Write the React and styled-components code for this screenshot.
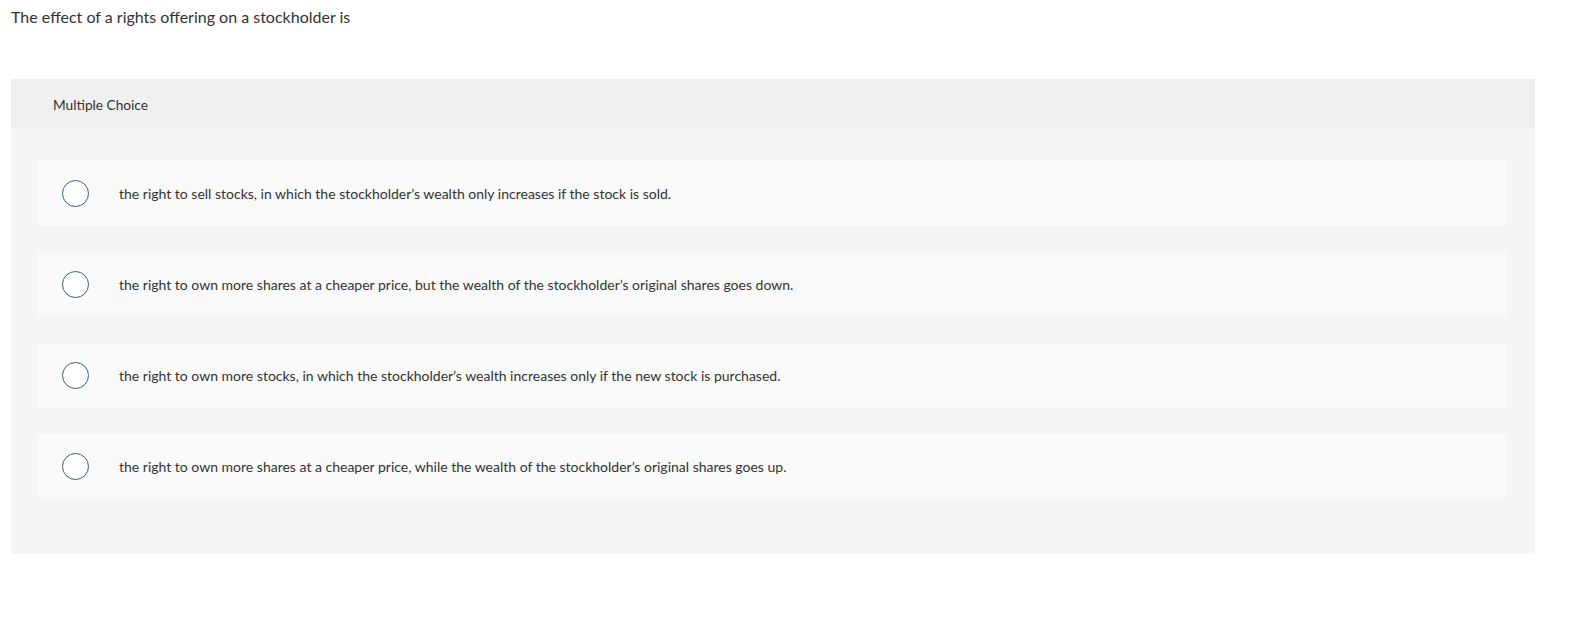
import styled, { createGlobalStyle } from "styled-components";

const GlobalStyle = createGlobalStyle`
  body {
    margin: 0;
    background: #ffffff;
    font-family: Lato, "Open Sans", sans-serif;
    color: #333333;
  }
`;

const options = [
  "the right to sell stocks, in which the stockholder’s wealth only increases if the stock is sold.",
  "the right to own more shares at a cheaper price, but the wealth of the stockholder’s original shares goes down.",
  "the right to own more stocks, in which the stockholder’s wealth increases only if the new stock is purchased.",
  "the right to own more shares at a cheaper price, while the wealth of the stockholder’s original shares goes up.",
];

const App = () => {
  return (
    <Page>
      <GlobalStyle />
      <Question>The effect of a rights offering on a stockholder is</Question>
      <Panel>
        <PanelHeader>Multiple Choice</PanelHeader>
        <OptionList>
          {options.map((text) => (
            <Option key={text}>
              <Radio />
              <OptionText>{text}</OptionText>
            </Option>
          ))}
        </OptionList>
      </Panel>
    </Page>
  );
};

const Page = styled.div`
  padding: 7px 34px 0 11px;
`;

const Question = styled.p`
  margin: 0;
  font-size: 16px;
  line-height: 20px;
  color: #333;
`;

const Panel = styled.div`
  margin-top: 52px;
  background: #f5f5f5;
  border-radius: 3px;
`;

const PanelHeader = styled.div`
  height: 50px;
  display: flex;
  align-items: center;
  padding-left: 42px;
  background: #f0f0f0;
  font-size: 13.7px;
  color: #333;
`;

const OptionList = styled.div`
  display: flex;
  flex-direction: column;
  gap: 26px;
  padding: 32px 28px 55px 26px;
`;

const Option = styled.div`
  height: 65px;
  display: flex;
  align-items: center;
  padding-left: 25px;
  background: #fafafa;
  border-radius: 2px;
`;

const Radio = styled.span`
  flex: none;
  width: 25px;
  height: 25px;
  border: 1.5px solid #2f5f7f;
  border-radius: 50%;
  background: #fff;
`;

const OptionText = styled.span`
  margin-left: 30px;
  font-size: 14px;
  color: #333;
`;

export default App;
